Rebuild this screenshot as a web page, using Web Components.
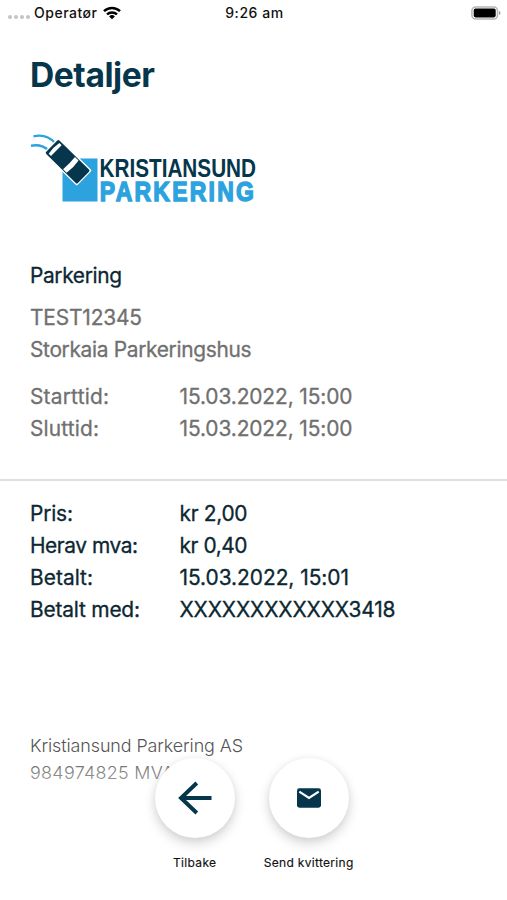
<!DOCTYPE html>
<html lang="no">
<head>
<meta charset="utf-8">
<title>Detaljer</title>
<style>
html,body{margin:0;height:100%;background:#fff}
body{font-family:Inter,"Liberation Sans",sans-serif;color:#0c2732;overflow:hidden}
</style>
</head>
<body>
<receipt-page></receipt-page>
<script>
const define = (name, html, ready) => customElements.define(name, class extends HTMLElement {
  constructor() {
    super();
    this.attachShadow({mode: 'open'});
  }
  connectedCallback() {
    const t = document.createElement('template');
    t.innerHTML = html;
    this.shadowRoot.replaceChildren(t.content.cloneNode(true));
    if (ready) ready(this);
  }
});

/* A line of text whose tracking is adjusted so that it is `w` pixels wide. */
define('fit-text', `<style>:host{display:inline-block;white-space:nowrap}span{display:inline-block}</style><span><slot></slot></span>`, el => {
  const span = el.shadowRoot.querySelector('span');
  const n = el.textContent.length;
  span.style.letterSpacing = '0px';
  const natural = span.getBoundingClientRect().width;
  span.style.letterSpacing = ((+el.getAttribute('w') - natural) / (n - 1)).toFixed(3) + 'px';
});

define('status-bar', `
<style>
:host{display:grid;grid-template-columns:1fr auto 1fr;height:26px;align-items:center;padding:0 6px 0 8px;box-sizing:border-box;font-size:14px;font-weight:450;color:#111;line-height:26px}
.left{display:flex;align-items:center}
.dots{display:flex;gap:2px;margin:8px 4px 0 0}
.dots i{width:4px;height:4px;border-radius:2px;background:#c4c4c4}
.wifi{margin-left:5px}
.batt{justify-self:end}
svg{display:block}
</style>
<div class="left"><div class="dots"><i></i><i></i><i></i><i></i></div><fit-text w="63">Operatør</fit-text>
<svg class="wifi" width="18" height="14" viewBox="0 0 18 14"><g fill="none" stroke="#000" stroke-width="2.5"><path d="M1 5.100a11.600 11.600 0 0 1 16 0"/><path d="M4 8.400a7.200 7.200 0 0 1 10 0"/></g><path d="M9 13.300 6.100 10.400a4.200 4.200 0 0 1 5.800 0z"/></svg></div>
<fit-text w="58">9:26 am</fit-text>
<svg class="batt" width="30" height="14" viewBox="0 0 30 14"><rect x=".9" y=".9" width="25.600" height="12.200" rx="3.800" fill="#fff" stroke="#b5b5b5" stroke-width="1.500"/><rect x="2.700" y="2.600" width="22" height="8.800" rx="1.800"/><path d="M28 5v4q1.500-.7 1.500-2T28 5z" fill="#999"/></svg>`);

define('parking-logo', `
<style>:host{display:block;width:240px;height:72px}svg{display:block;overflow:visible}</style>
<svg width="240" height="72" viewBox="30 132 240 72">
<rect x="62.500" y="158.500" width="35" height="43" fill="#2ca3df"/>
<g fill="none" stroke="#2ca3df" stroke-width="2.400"><path d="M33.500 136.300c8-1.800 16 .4 21.500 6.700"/><path d="M31 145.700c7.500-1.500 12.500-.3 18 5"/></g>
<g transform="translate(67.600 161.700) rotate(44.500)">
<rect x="-23.500" y="-10.800" width="47" height="21.600" rx="1.500" fill="#fff"/>
<rect x="-22.200" y="-9.400" width="44.400" height="18.800" rx="1.500" fill="#06364b"/>
<path d="M-19-7.600h3.200v15.200H-19q-1.600-7.600 0-15.200zM2-8.500h5q1.600 8.500 0 17H2q.9-8.500 0-17z" fill="#fff"/>
</g>
<g font-family="Liberation Sans, Arial, sans-serif" font-weight="700">
<text transform="translate(99.500 177) scale(.86 1)" font-size="25.500" fill="#06364b" textLength="182" lengthAdjust="spacingAndGlyphs">KRISTIANSUND</text>
<text transform="translate(99.800 201) scale(.82 1)" font-size="28" fill="#2ca3df" stroke="#2ca3df" stroke-width="1.500" textLength="188" lengthAdjust="spacing">PARKERING</text>
</g></svg>`);

define('info-row', `
<style>:host{display:grid;grid-template-columns:149.500px 1fr;height:32px;line-height:32px;white-space:nowrap}</style>
<slot name="label"></slot><slot></slot>`);

define('info-section', `<style>:host{display:block;padding:0 30px;font-size:20.900px;font-weight:400;-webkit-text-stroke:.3px}:host([muted]){color:#707070}</style><slot></slot>`);

define('round-action', `
<style>
:host{display:flex;flex-direction:column;align-items:center;width:114px}
button{width:80px;height:80px;border:0;border-radius:50%;padding:0;background:#fff;box-shadow:0 5px 12px rgba(0,0,0,.18),0 0 6px rgba(0,0,0,.04);display:grid;place-items:center}
.label{font-size:12px;font-weight:400;line-height:16px;margin-top:17px;color:#111;-webkit-text-stroke:.15px}
</style>
<button><slot name="icon"></slot></button><div class="label"><slot></slot></div>`);

define('action-bar', `
<style>
:host{position:absolute;left:0;right:0;bottom:0;height:142.500px;padding-left:137.700px;display:flex;box-sizing:border-box;align-items:flex-start;background:linear-gradient(rgba(255,255,255,.1),rgba(255,255,255,.5) 32px,#fff 60px)}
svg{display:block}
</style>
<round-action><svg slot="icon" width="36" height="36" viewBox="0 0 36 36"><path d="M34.500 18H4M19.800 3 4 18l15.800 15" fill="none" stroke="#06364b" stroke-width="3.900"/></svg><fit-text w="43">Tilbake</fit-text></round-action>
<round-action><svg slot="icon" width="26" height="22" viewBox="0 0 26 22"><rect x="1" y="1.300" width="24" height="19.400" rx="2.400" fill="#06364b"/><path d="m3.300 4.700 9.700 6.300 9.700-6.300" fill="none" stroke="#fff" stroke-width="2.200"/></svg><fit-text w="89.500">Send kvittering</fit-text></round-action>`);

define('receipt-page', `
<style>
:host{display:block;position:relative;width:507px;height:900px;background:#fff;overflow:hidden}
h1{margin:28px 30px 0;font-size:33.600px;line-height:42px;font-weight:700;color:#06364b}
parking-logo{margin:36px 0 0 30px}
.a{margin-top:55.500px}.b{margin-top:10px}.c{margin-top:15px}
hr{margin:34.500px 0 0;border:0;height:2px;background:#e0e0e0}
.d{margin-top:16.500px}
footer{margin:106.500px 30px 0;font-size:17.900px;line-height:27px;font-weight:300;color:#555}
footer fit-text{display:block}
</style>
<status-bar></status-bar>
<h1><fit-text w="125">Detaljer</fit-text></h1>
<parking-logo></parking-logo>
<info-section class="a"><info-row><fit-text slot="label" w="92">Parkering</fit-text></info-row></info-section>
<info-section class="b" muted>
<info-row><fit-text slot="label" w="112">TEST12345</fit-text></info-row>
<info-row><fit-text slot="label" w="221.500">Storkaia Parkeringshus</fit-text></info-row></info-section>
<info-section class="c" muted>
<info-row><fit-text slot="label" w="79">Starttid:</fit-text><fit-text w="173">15.03.2022, 15:00</fit-text></info-row>
<info-row><fit-text slot="label" w="69">Sluttid:</fit-text><fit-text w="173">15.03.2022, 15:00</fit-text></info-row></info-section>
<hr>
<info-section class="d">
<info-row><fit-text slot="label" w="43">Pris:</fit-text><fit-text w="68">kr 2,00</fit-text></info-row>
<info-row><fit-text slot="label" w="108">Herav mva:</fit-text><fit-text w="68">kr 0,40</fit-text></info-row>
<info-row><fit-text slot="label" w="63">Betalt:</fit-text><fit-text w="169.500">15.03.2022, 15:01</fit-text></info-row>
<info-row><fit-text slot="label" w="110">Betalt med:</fit-text><fit-text w="216">XXXXXXXXXXXX3418</fit-text></info-row></info-section>
<footer><fit-text w="213">Kristiansund Parkering AS</fit-text><fit-text w="144">984974825 MVA</fit-text></footer>
<action-bar></action-bar>`);
</script>
</body>
</html>
